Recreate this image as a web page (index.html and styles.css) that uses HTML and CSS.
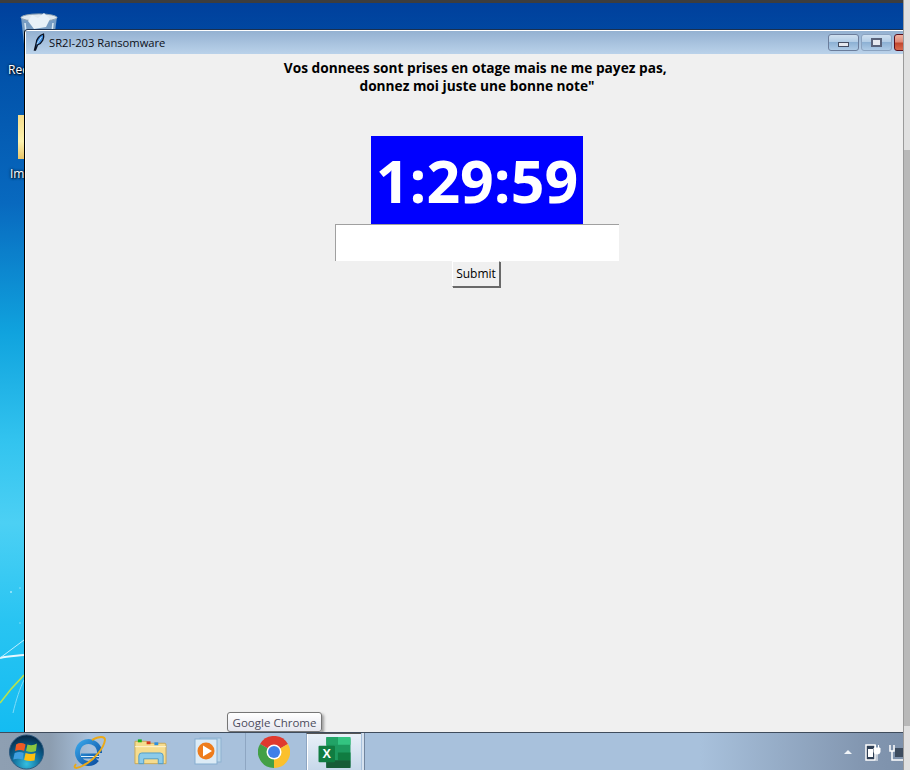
FILE: index.html
```html
<!DOCTYPE html>
<html lang="fr">
<head>
<meta charset="utf-8">
<title>SR2I-203 Ransomware</title>
<link rel="stylesheet" href="styles.css">
</head>
<body>
<div class="screen">
  <div class="main">
    <div class="topstrip"></div>
    <div class="desktop">
      <svg class="wallpaper" viewBox="0 0 24 160" width="24" height="160" aria-hidden="true">
        <path d="M0 131 C8 120 16 111 24 103" fill="none" stroke="#b6e24e" stroke-width="1.6"/>
        <path d="M0 86 C8 84 16 84 24 83" fill="none" stroke="#e8f8ff" stroke-width="2"/>
        <path d="M0 86 C8 80 16 74 24 68" fill="none" stroke="#bfeeff" stroke-width="1"/>
        <path d="M13 141 C16 128 20 116 24 108" fill="none" stroke="#7fdcf8" stroke-width="1"/>
        <circle cx="11" cy="20" r="1" fill="#a8e8fa"/><circle cx="20" cy="16" r=".7" fill="#a8e8fa"/><circle cx="20" cy="51" r=".7" fill="#a8e8fa"/>
      </svg>
      <div class="icon icon-bin">
        <svg width="38" height="44" viewBox="0 0 38 44" aria-hidden="true">
          <path d="M1 4 L5 40 Q19 45 32 40 L37 4 Z" fill="#9fb9cf" opacity=".75"/>
          <ellipse cx="19" cy="4.5" rx="18" ry="3.6" fill="#dfe8ee" stroke="#8fa3b3"/>
          <path d="M8 8 L12 2 L18 5 L24 0 L30 6 L26 14 L14 16 Z" fill="#e8f1f8"/>
          <path d="M5 10 L8 38 M33 10 L30 38" stroke="#dbe9f3" stroke-width="1.5"/>
        </svg>
      </div>
      <div class="label label-bin">Recycle Bin</div>
      <div class="folder"></div>
      <div class="label label-img">Images</div>

      <section class="window">
        <header class="titlebar">
          <svg class="feather" width="12" height="18" viewBox="0 0 12 18" aria-hidden="true">
            <path d="M1.500 17 L3 11 C3 6 7 2 10.500 1 C11.500 5 9.500 10 4.500 12 L2.500 17 Z" fill="#3f8fe0" stroke="#0a1020" stroke-width="1.300"/>
            <path d="M4 11 L8.500 4" stroke="#dcefff" stroke-width=".8"/>
          </svg>
          <span class="wintitle">SR2I-203 Ransomware</span>
          <div class="controls">
            <div class="ctrl"><span class="glyph-min"></span></div>
            <div class="ctrl ctrl-soft"><span class="glyph-max"></span></div>
            <div class="ctrl ctrl-close"></div>
          </div>
        </header>
        <main class="client">
          <h1 class="message">Vos donnees sont prises en otage mais ne me payez pas, <br>donnez moi juste une bonne note"</h1>
          <div class="timer">1:29:59</div>
          <input class="entry" type="text" aria-label="Clé">
          <button class="submit" type="button">Submit</button>
        </main>
      </section>

      <div class="tooltip">Google Chrome</div>
    </div>

    <footer class="taskbar">
      <div class="slot slot-start">
        <svg width="37" height="36" viewBox="0 0 38 38" aria-hidden="true">
          <defs>
            <radialGradient id="orb" cx=".5" cy=".85" r=".85">
              <stop offset="0" stop-color="#35bfe0"/><stop offset=".55" stop-color="#0a5f8e"/><stop offset="1" stop-color="#06243f"/>
            </radialGradient>
          </defs>
          <circle cx="19" cy="19" r="18" fill="url(#orb)" stroke="#2c5a80"/>
          <path d="M8 11 Q13 8 18 11 L16.500 18 Q12 16 7 18 Z" fill="#ef5a24"/>
          <path d="M20 11 Q25 13 30 10 L29 18 Q24 20 18.500 18 Z" fill="#8cc63f"/>
          <path d="M6.500 20 Q12 18 16 20 L15 27 Q10 25 5 27 Z" fill="#3f9fe0"/>
          <path d="M18 20 Q24 22 28.500 20 L27.500 28 Q22 29 16.500 27.500 Z" fill="#fdc010"/>
        </svg>
      </div>
      <div class="slot slot-ie">
        <svg width="34" height="34" viewBox="0 0 34 34" aria-hidden="true">
          <defs>
            <linearGradient id="ieblue" x1="0" y1="0" x2="1" y2="1">
              <stop offset="0" stop-color="#37a4e8"/><stop offset="1" stop-color="#0a4da0"/>
            </linearGradient>
          </defs>
          <path d="M27 21 H9 M27.500 18 A11 11 0 1 0 25 24.500" fill="none" stroke="url(#ieblue)" stroke-width="5"/>
          <path d="M9 21.500 H27" stroke="#dff2fb" stroke-width="1"/>
          <path d="M4 29 C0 34 5 34 12 30 C22 25 32 13 33 5 C33 1 27 1 20 5" fill="none" stroke="#eaa918" stroke-width="2"/>
        </svg>
      </div>
      <div class="slot slot-folder">
        <svg width="33" height="30" viewBox="0 0 34 30" aria-hidden="true">
          <path d="M1 4 H13 L15 6 H32 Q33 6 33 8 V27 H1 Z" fill="#f6dc8e" stroke="#c9a856"/>
          <rect x="4" y="2" width="4" height="3" fill="#19b020"/>
          <rect x="13" y="4" width="4" height="3" fill="#d83a1c"/>
          <rect x="21" y="5" width="4" height="3" fill="#2c8fe0"/>
          <path d="M5 27 V19 Q5 16 8 16 H27 Q30 16 30 19 V27 H25 V22 H10 V27 Z" fill="#8ccbea" stroke="#4f9cc8"/>
          <rect x="1" y="9" width="32" height="1" fill="#fff6d4"/>
        </svg>
      </div>
      <div class="slot slot-wmp">
        <svg width="32" height="30" viewBox="0 0 32 30" aria-hidden="true">
          <rect x="6" y="1" width="21" height="24" fill="#bcd6ea" stroke="#8eb2cf"/>
          <rect x="1" y="2" width="22" height="25" fill="#dcebf6" stroke="#86aed0"/>
          <circle cx="12" cy="14" r="8.500" fill="#ee7c1c"/>
          <path d="M9 8.500 L18 14 L9 19.500 Z" fill="#fff"/>
        </svg>
      </div>
      <div class="slot slot-chrome">
        <svg width="32" height="32" viewBox="0 0 32 32" aria-hidden="true">
          <path d="M16 16 L2.100 8 A16 16 0 0 1 29.900 8 Z" fill="#e0392e"/>
          <path d="M16 16 L29.900 8 A16 16 0 0 1 16 32 Z" fill="#fbc02d"/>
          <path d="M16 16 L16 32 A16 16 0 0 1 2.100 8 Z" fill="#43a047"/>
          <circle cx="16" cy="16" r="7.500" fill="#fff"/>
          <circle cx="16" cy="16" r="6" fill="#3f7fe8"/>
        </svg>
      </div>
      <div class="slot slot-excel">
        <svg width="33" height="31" viewBox="0 0 33 32" aria-hidden="true">
          <rect x="8" y="0" width="25" height="32" rx="2" fill="#1d9a5f"/>
          <rect x="20" y="0" width="13" height="8" fill="#33c481"/>
          <rect x="8" y="0" width="12" height="8" fill="#21a366"/>
          <rect x="20" y="16" width="13" height="8" fill="#107c41"/>
          <rect x="8" y="24" width="25" height="8" fill="#185c37"/>
          <rect x="0" y="9" width="17" height="17" rx="1" fill="#107c41"/>
          <text class="excel-x" x="8.500" y="22" text-anchor="middle">X</text>
        </svg>
      </div>
      <div class="slot-edge"></div>
      <div class="tray">
        <span class="tray-arrow"></span>
        <svg width="16" height="20" viewBox="0 0 16 20" aria-hidden="true">
          <path d="M1 3 H10 V18 H1 Z" fill="#2f3f55" stroke="#fff" stroke-width="1.500"/>
          <rect x="3" y="7" width="5" height="8" fill="#fff"/>
          <path d="M9 6 V10 Q9 12 12 12 Q15 12 15 10 V6 Z M10.500 3 V6 M13.500 3 V6 M12 12 V19" fill="#fff" stroke="#fff"/>
        </svg>
        <svg width="14" height="20" viewBox="0 0 14 20" aria-hidden="true">
          <path d="M1 3 V9 H5 V3 M3 9 V18 H14" fill="none" stroke="#fff" stroke-width="1.500"/>
          <rect x="6" y="6" width="8" height="9" fill="#3d4c5f"/>
        </svg>
      </div>
    </footer>
  </div>
  <aside class="scrollbar">
    <div class="sb-cap"></div>
    <div class="sb-thumb"></div>
    <div class="sb-track"></div>
  </aside>
</div>
</body>
</html>
```

FILE: styles.css
```css
* { box-sizing: border-box; }
html, body { margin: 0; padding: 0; }
body { font-family: "Open Sans", "Noto Sans", sans-serif; background: #e0e0e0; }

.screen { display: flex; width: 910px; height: 770px; overflow: hidden; }
.main { display: flex; flex-direction: column; flex: none; width: 904px; height: 770px; border-right: 1px solid #9a9a9a; }

.topstrip { height: 3px; background: #3d3d3d; flex: none; }

.desktop {
  position: relative;
  flex: 1;
  overflow: hidden;
  background: linear-gradient(180deg, #00409c 0, #0150a8 60px, #0869bf 200px, #10a3de 330px, #33c4ef 440px, #4cd0f4 520px, #28c4f2 620px, #14bcf2 729px);
}
.wallpaper { position: absolute; left: 0; top: 569px; }

.icon-bin { position: absolute; left: 20px; top: 10px; }
.label {
  position: absolute;
  color: #fff;
  font-size: 12px;
  line-height: 16px;
  white-space: nowrap;
  text-shadow: 1px 1px 2px #000, 0 0 3px #000;
}
.label-bin { left: 8px; top: 59px; }
.label-img { left: 10px; top: 163px; }
.folder {
  position: absolute;
  left: 18px;
  top: 112px;
  width: 8px;
  height: 44px;
  background: linear-gradient(180deg, #f6dd8c, #fdf3b0 60%, #e9c568);
}

.window {
  position: absolute;
  left: 24px;
  top: 26px;
  width: 904px;
  height: 703px;
  display: flex;
  flex-direction: column;
  border-left: 1px solid #000;
  border-top: 1px solid #1a3050;
  border-radius: 4px 0 0 0;
  background: #fff;
  padding: 1px 0 0 1px;
}
.titlebar {
  flex: none;
  display: flex;
  align-items: center;
  height: 23px;
  background: linear-gradient(180deg, #94b1d1, #bad2ea);
  padding: 0 3px 0 7px;
}
.feather { flex: none; margin-top: -1px; }
.wintitle { flex: none; margin-left: 4px; font-size: 11.200px; color: #0c1018; line-height: 16px; white-space: nowrap; }
.controls { display: flex; gap: 2px; margin-left: auto; }
.ctrl {
  width: 31px;
  height: 17px;
  display: flex;
  align-items: center;
  justify-content: center;
  border: 1px solid #6b7d9b;
  border-radius: 3px;
  background: linear-gradient(180deg, #cfe0f0 0, #b3cde6 45%, #8db1d4 50%, #aecbe6 100%);
}
.ctrl-soft { border-color: #8ba3c0; }
.ctrl-close {
  border-color: #5a0f1c;
  background: linear-gradient(180deg, #eeb1a0 0, #e08a78 45%, #c2472d 55%, #d96a4e 100%);
}
.glyph-min { width: 11px; height: 5px; margin-top: 4px; background: #e6e9ef; border: 1px solid #444c60; }
.glyph-max { width: 11px; height: 9px; background: #e6e9ef; border: 2px solid #59637a; box-shadow: inset 0 0 0 1px #e6e9ef; }

.client {
  flex: 1;
  display: flex;
  flex-direction: column;
  align-items: center;
  background: #f0f0f0;
}
.message {
  margin: 5px 0 0;
  font-size: 13.700px;
  font-weight: 700;
  line-height: 18px;
  color: #000;
  text-align: center;
  white-space: pre;
}
.timer {
  margin-top: 41px;
  width: 212px;
  height: 88px;
  background: #0000ff;
  color: #fff;
  font-size: 59px;
  font-weight: 700;
  line-height: 88px;
  text-align: center;
  white-space: nowrap;
}
.entry {
  display: block;
  width: 284px;
  height: 37px;
  margin: 0;
  padding: 0;
  background: #fff;
  border: 0;
  border-top: 1px solid #a0a0a0;
  border-left: 1px solid #a0a0a0;
  outline: 0;
}
.submit {
  width: 48px;
  height: 26px;
  margin: 0 2px 0 0;
  padding: 0 0 2px;
  font-family: inherit;
  font-size: 12px;
  color: #000;
  background: #f0f0f0;
  border: 1px solid;
  border-color: #fff #696969 #696969 #fff;
  box-shadow: 1px 1px 0 #696969;
}

.tooltip {
  position: absolute;
  left: 227px;
  top: 709px;
  width: 95px;
  height: 20px;
  display: flex;
  align-items: center;
  justify-content: center;
  font-size: 11.500px;
  color: #4c4c5c;
  background: linear-gradient(180deg, #fff, #e6e7ef);
  border: 1px solid #767676;
  border-radius: 3px;
  box-shadow: 2px 2px 3px rgba(0, 0, 0, .35);
}

.taskbar {
  flex: none;
  display: flex;
  align-items: center;
  height: 38px;
  border-top: 1px solid #3f4c5c;
  background: linear-gradient(90deg, #8e9fb2 0, #8c9db0 50px, #a8c1dc 90px, #a8c1dc 700px, #8397b1 860px, #7d91ab 903px);
}
.slot { height: 37px; display: flex; align-items: center; justify-content: center; flex: none; }
.slot-start { width: 52px; }
.slot-ie { width: 73px; }
.slot-folder { width: 50px; }
.slot-wmp { width: 70px; }
.slot-chrome { width: 61px; padding-right: 5px; border-left: 1px solid #8ea6c2; }
.slot-excel {
  width: 55px;
  border-left: 1px solid #8ea6c2;
  background: linear-gradient(180deg, #e8f0f8, #c7d8ea);
  box-shadow: inset 1px 0 0 #fff;
  border-top: 1px solid #555;
}
.slot-edge { width: 3px; height: 37px; margin-left: 1px; background: #d6e2ef; border-right: 1px solid #71859e; flex: none; }
.tray { display: flex; align-items: center; gap: 8px; margin-left: auto; }
.tray-arrow {
  width: 0;
  height: 0;
  margin-right: 5px;
  border-left: 4px solid transparent;
  border-right: 4px solid transparent;
  border-bottom: 4px solid #f0f4f8;
}
.excel-x { font-family: "Liberation Sans", sans-serif; font-size: 13px; font-weight: 700; fill: #fff; }

.scrollbar { flex: none; width: 6px; display: flex; flex-direction: column; height: 770px; }
.sb-cap { height: 150px; background: #e0e0e0; }
.sb-thumb { height: 576px; background: #b9b9b9; }
.sb-track { flex: 1; background: #e0e0e0; }
```
